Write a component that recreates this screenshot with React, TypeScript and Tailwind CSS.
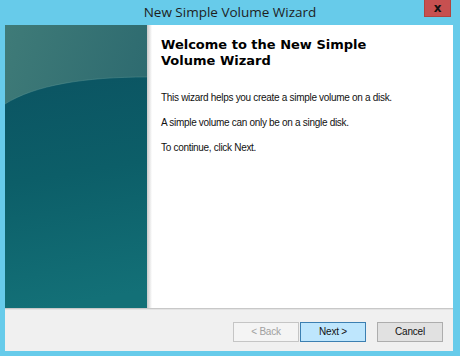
import React from 'react'

const Panel = () => (
  <svg width="142" height="283" viewBox="0 0 142 283" className="block">
    <defs>
      <linearGradient id="topG" x1="0" y1="0" x2="1" y2="0.6">
        <stop offset="0" stopColor="#3f7b78" />
        <stop offset="1" stopColor="#2a676e" />
      </linearGradient>
      <linearGradient id="lowG" x1="0" y1="53" x2="40" y2="283" gradientUnits="userSpaceOnUse">
        <stop offset="0" stopColor="#0b5462" />
        <stop offset="0.45" stopColor="#0c5e68" />
        <stop offset="1" stopColor="#137077" />
      </linearGradient>
    </defs>
    <rect width="142" height="283" fill="url(#topG)" />
    <path d="M0 79 C30 60 80 52 142 52 L142 283 L0 283 Z" fill="url(#lowG)" />
    <path d="M0 79 C30 60 80 52 142 52" fill="none" stroke="#6aa19d" strokeOpacity="0.35" strokeWidth="1" />
  </svg>
)

export default function App() {
  return (
    <div className="w-[460px] h-[356px] bg-[#67cbea] flex flex-col overflow-hidden">
      <div className="h-[25px] grid grid-cols-[1fr_auto_1fr] items-start">
        <div />
        <div className="pt-[3px] text-[13.5px] leading-[18px] text-[#1e1e1e] font-['Open_Sans',sans-serif]">
          New Simple Volume Wizard
        </div>
        <div className="flex justify-end pr-[9px]">
          <div className="w-[27px] h-[17px] bg-[#c75050] border border-[#b0443f] border-t-0 flex items-center justify-center">
            <span className="text-[12px] leading-none font-bold text-[#111] font-['DejaVu_Sans',sans-serif] -mt-[1px]">x</span>
          </div>
        </div>
      </div>
      <div className="ml-[5px] w-[448px] h-[326px] flex flex-col bg-white">
        <div className="h-[283px] flex">
          <Panel />
          <div className="w-[5px] bg-gradient-to-r from-[#c9c9c9] to-white" />
          <div className="flex-1 pl-[9px] pt-[12px]">
            <h1 className="text-[13px] leading-[16px] font-bold text-black font-['DejaVu_Sans',Verdana,sans-serif] w-[220px]">
              Welcome to the New Simple Volume Wizard
            </h1>
            <div className="mt-[22px] flex flex-col gap-[12px] text-[10px] leading-[13px] tracking-[-0.3px] text-[#111] font-['Liberation_Sans',Arial,sans-serif]">
              <p>This wizard helps you create a simple volume on a disk.</p>
              <p>A simple volume can only be on a single disk.</p>
              <p>To continue, click Next.</p>
            </div>
          </div>
        </div>
        <div className="h-[1px] bg-[#c8c8c8]" />
        <div className="h-[1px] bg-[#e3e3e3]" />
        <div className="flex-1 bg-[#f0f0f0] flex justify-end items-start pt-[12px] pr-[10px] text-[10px] tracking-[-0.2px] font-['Liberation_Sans',Arial,sans-serif]">
          <button disabled className="w-[66px] h-[20px] border border-[#c5c5c5] bg-[#f4f4f4] text-[#a0a0a0] leading-none">
            &lt; Back
          </button>
          <button className="ml-[1px] w-[66px] h-[20px] border border-[#3c7fb1] bg-[#bee6fd] text-[#111] leading-none">
            Next &gt;
          </button>
          <button className="ml-[11px] w-[66px] h-[20px] border border-[#adadad] bg-[#e1e1e1] text-[#111] leading-none">
            Cancel
          </button>
        </div>
      </div>
    </div>
  )
}
